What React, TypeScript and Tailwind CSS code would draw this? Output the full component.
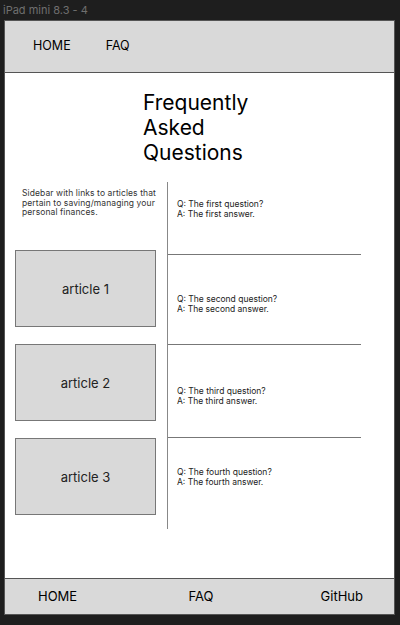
const faqs = [
  { q: "The first question?", a: "The first answer.", pt: "pt-[17px]", h: "h-[73px]", border: true },
  { q: "The second question?", a: "The second answer.", pt: "pt-[39px]", h: "h-[90px]", border: true },
  { q: "The third question?", a: "The third answer.", pt: "pt-[41px]", h: "h-[93px]", border: true },
  { q: "The fourth question?", a: "The fourth answer.", pt: "pt-[29px]", h: "h-[91px]", border: false },
];

const articles = ["article 1", "article 2", "article 3"];

const App: React.FC = () => {
  return (
    <div className="w-[400px] h-[625px] bg-[#1e1e1e] overflow-hidden font-['Inter',sans-serif]">
      <div className="h-[20px] pl-[3px] text-[11px] leading-[20px] text-[#6f6f6f]">iPad mini 8.3 - 4</div>
      <div className="ml-[4px] w-[391px] border-x border-[#555]">
        <header className="h-[53px] bg-[#d9d9d9] border-y border-[#555] flex items-center pl-[28px] gap-[35px] text-[12.5px] text-black">
          <span>HOME</span>
          <span>FAQ</span>
        </header>

        <main className="h-[505px] bg-white">
          <h1 className="ml-[138px] pt-[17px] w-[120px] text-[21px] leading-[25px] text-black">
            Frequently Asked Questions
          </h1>

          <div className="flex mt-[17px]">
            <aside className="w-[162px]">
              <p className="pl-[17px] pt-[7px] w-[160px] text-[8.5px] leading-[9.5px] tracking-[0.1px] text-[#333]">
                Sidebar with links to articles that pertain to saving/managing your personal finances.
              </p>
              <div className="flex flex-col gap-[17px] mt-[32px] ml-[10px]">
                {articles.map((a) => (
                  <div
                    key={a}
                    className="w-[141px] h-[77px] pt-[4px] bg-[#d9d9d9] border border-[#777] flex items-center justify-center text-[13px] text-[#222]"
                  >
                    {a}
                  </div>
                ))}
              </div>
            </aside>

            <section className="w-[194px] border-l border-[#888]">
              {faqs.map((f) => (
                <div
                  key={f.q}
                  className={`${f.h} ${f.pt} pl-[9px] text-[8.5px] leading-[10px] text-[#222] ${f.border ? "border-b border-[#777]" : ""}`}
                >
                  <p>Q: {f.q}</p>
                  <p>A: {f.a}</p>
                </div>
              ))}
            </section>
          </div>
        </main>

        <footer className="h-[37px] bg-[#d9d9d9] border-y border-[#555] flex items-center justify-between pl-[33px] pr-[31px] text-[13px] text-black">
          <span>HOME</span>
          <span className="ml-[4px]">FAQ</span>
          <span>GitHub</span>
        </footer>
      </div>
    </div>
  );
};

export default App;
